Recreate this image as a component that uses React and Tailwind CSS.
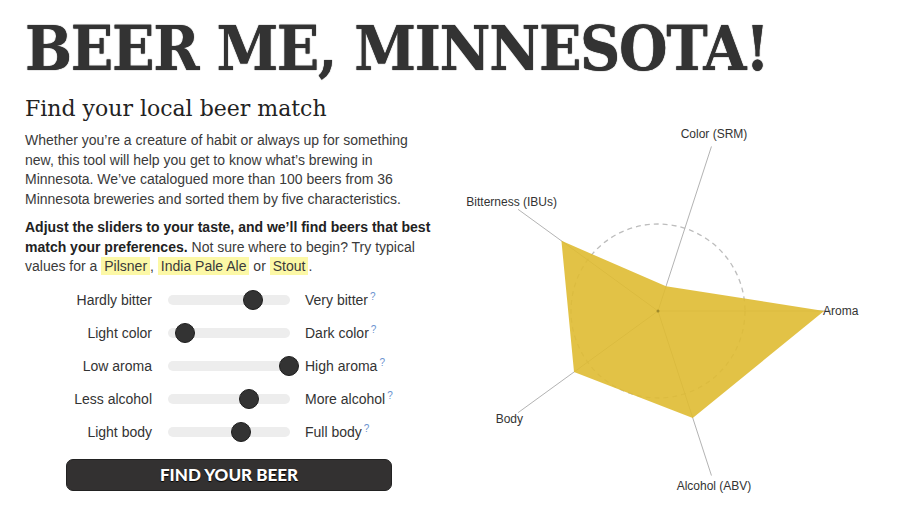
import React from 'react';

const traits = [
  { key: 'bitter', low: 'Hardly bitter', high: 'Very bitter', value: 0.7 },
  { key: 'color', low: 'Light color', high: 'Dark color', value: 0.14 },
  { key: 'aroma', low: 'Low aroma', high: 'High aroma', value: 0.99 },
  { key: 'alcohol', low: 'Less alcohol', high: 'More alcohol', value: 0.66 },
  { key: 'body', low: 'Light body', high: 'Full body', value: 0.6 },
];

function Slider({ trait }) {
  return (
    <div className="flex items-center h-[33px]">
      <div className="w-[127px] text-right text-[14px] text-[#333]">{trait.low}</div>
      <div className="relative ml-[16px] w-[122px] h-[10px] rounded-full bg-[#ededed]">
        <div
          className="absolute top-1/2 w-[20px] h-[20px] -ml-[10px] -mt-[10px] rounded-full bg-[#333] border border-[#1e1e1e]"
          style={{ left: `${trait.value * 100}%` }}
        />
      </div>
      <div className="ml-[15px] text-[14px] text-[#333]">
        {trait.high}
        <sup className="ml-[2px] text-[10px] text-[#6b93cf]">?</sup>
      </div>
    </div>
  );
}

function Radar() {
  const cx = 208;
  const cy = 230;
  const R = 173;
  // angle in degrees, clockwise from the right
  const axes = [
    { label: 'Color (SRM)', angle: -72, value: 0.15, lx: 264, ly: 57, anchor: 'middle' },
    { label: 'Aroma', angle: 0, value: 0.96, lx: 373, ly: 234, anchor: 'start' },
    { label: 'Alcohol (ABV)', angle: 72, value: 0.65, lx: 264, ly: 409, anchor: 'middle' },
    { label: 'Body', angle: 144, value: 0.6, lx: 73, ly: 342, anchor: 'end' },
    { label: 'Bitterness (IBUs)', angle: 216, value: 0.69, lx: 107, ly: 125, anchor: 'end' },
  ];
  const pt = (a, r) => {
    const t = (a * Math.PI) / 180;
    return [cx + Math.cos(t) * r, cy + Math.sin(t) * r];
  };
  const poly = axes.map((ax) => pt(ax.angle, ax.value * R).join(',')).join(' ');

  return (
    <svg width="450" height="426" className="block">
      <circle cx={cx} cy={cy} r="87" fill="none" stroke="#bdbdbd" strokeWidth="1.3" strokeDasharray="5 4" />
      {axes.map((ax) => {
        const [x, y] = pt(ax.angle, R);
        return <line key={ax.label} x1={cx} y1={cy} x2={x} y2={y} stroke="#b3b3b3" strokeWidth="1" />;
      })}
      <polygon points={poly} fill="#dfbb32" fillOpacity="0.9" />
      <circle cx={cx} cy={cy} r="1.5" fill="#a08a2a" />
      {axes.map((ax) => (
        <text
          key={ax.label}
          x={ax.lx}
          y={ax.ly}
          textAnchor={ax.anchor}
          fontSize="12"
          fill="#333"
          fontFamily="'Liberation Sans', Arial, sans-serif"
        >
          {ax.label}
        </text>
      ))}
    </svg>
  );
}

export default function App() {
  return (
    <div className="w-[900px] h-[506px] overflow-hidden bg-white pl-[25px] pt-[18px] font-['Liberation_Sans',Arial,sans-serif]">
      <h1 className="font-['DejaVu_Serif_Condensed','DejaVu_Serif',serif] font-bold text-[62px] leading-[62px] tracking-[-1.3px] text-[#333] whitespace-nowrap [text-shadow:0_0_1px_#111]">
        BEER ME, MINNESOTA!
      </h1>

      <div className="flex">
        <div className="w-[425px] shrink-0">
          <h2 className="mt-[15px] font-['DejaVu_Serif',serif] text-[22px] leading-[28px] text-[#222]">
            Find your local beer match
          </h2>
          <p className="mt-[8px] w-[400px] text-[14px] leading-[19.5px] text-[#3a3a3a]">
            Whether you’re a creature of habit or always up for something new, this tool will help you get to know
            what’s brewing in Minnesota. We’ve catalogued more than 100 beers from 36 Minnesota breweries and sorted
            them by five characteristics.
          </p>
          <p className="mt-[9px] w-[412px] text-[14px] leading-[19.5px] text-[#3a3a3a]">
            <strong className="text-[#222]">Adjust the sliders to your taste, and we’ll find beers that best match your preferences.</strong>{' '}
            Not sure where to begin? Try typical values for a{' '}
            <span className="inline-block leading-[18px] bg-[#fcf8a6] px-[3px]">Pilsner</span>,{' '}
            <span className="inline-block leading-[18px] bg-[#fcf8a6] px-[3px]">India Pale Ale</span> or{' '}
            <span className="inline-block leading-[18px] bg-[#fcf8a6] px-[3px]">Stout</span>.
          </p>

          <div className="mt-[7px]">
            {traits.map((t) => (
              <Slider key={t.key} trait={t} />
            ))}
          </div>

          <button className="mt-[10px] ml-[41px] w-[326px] h-[32px] rounded-[7px] bg-[#333131] border border-[#222] text-white font-['Lato',sans-serif] font-black text-[17px] [text-shadow:0_1px_1px_#000]">
            FIND YOUR BEER
          </button>
        </div>

        <div className="mt-[1px]">
          <Radar />
        </div>
      </div>
    </div>
  );
}
